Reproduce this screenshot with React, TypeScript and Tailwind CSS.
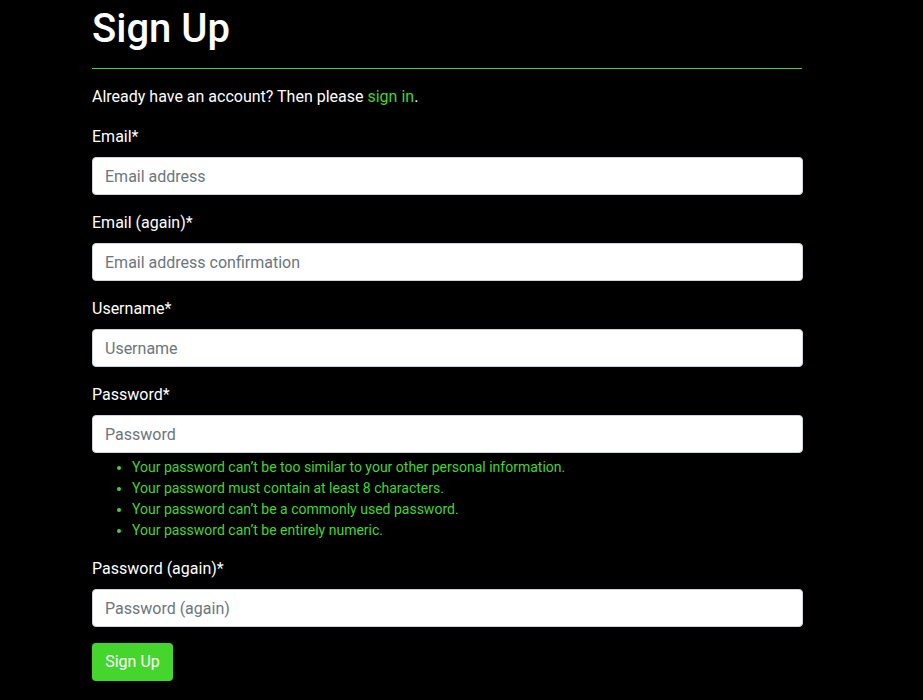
import React from 'react'

const green = 'text-[#44d62c]'

function Field({ label, placeholder, type = 'text', children }: { label: string; placeholder: string; type?: string; children?: React.ReactNode }) {
  return (
    <div className="mb-4">
      <label className="block mb-2 leading-6">{label}</label>
      <input
        type={type}
        placeholder={placeholder}
        className="block w-[711px] h-[38px] px-3 rounded-[4px] border border-[#ced4da] bg-white text-[#495057] text-base placeholder:text-[#6c757d] outline-none"
      />
      {children}
    </div>
  )
}

export default function App() {
  return (
    <div className="min-h-[700px] bg-black text-white" style={{ fontFamily: 'Roboto, "Liberation Sans", sans-serif' }}>
      <div className="ml-[92px] w-[710px] pt-[5px]">
        <h1 className="text-[40px] leading-[48px] font-medium pb-[15px] border-b border-[#44d62c]">Sign Up</h1>
        <p className="mt-4 mb-4 leading-6">
          Already have an account? Then please <a href="#" className={green}>sign in</a>.
        </p>
        <form onSubmit={(e) => e.preventDefault()}>
          <Field label="Email*" placeholder="Email address" type="email" />
          <Field label="Email (again)*" placeholder="Email address confirmation" type="email" />
          <Field label="Username*" placeholder="Username" />
          <Field label="Password*" placeholder="Password" type="password">
            <ul className={`mt-1 pl-10 list-disc text-sm leading-[21px] ${green} marker:text-[#44d62c]`}>
              <li>Your password can’t be too similar to your other personal information.</li>
              <li>Your password must contain at least 8 characters.</li>
              <li>Your password can’t be a commonly used password.</li>
              <li>Your password can’t be entirely numeric.</li>
            </ul>
          </Field>
          <Field label="Password (again)*" placeholder="Password (again)" type="password" />
          <button type="submit" className="h-[38px] w-[81px] rounded-[4px] bg-[#44d62c] text-white leading-6">
            Sign Up
          </button>
        </form>
      </div>
    </div>
  )
}
